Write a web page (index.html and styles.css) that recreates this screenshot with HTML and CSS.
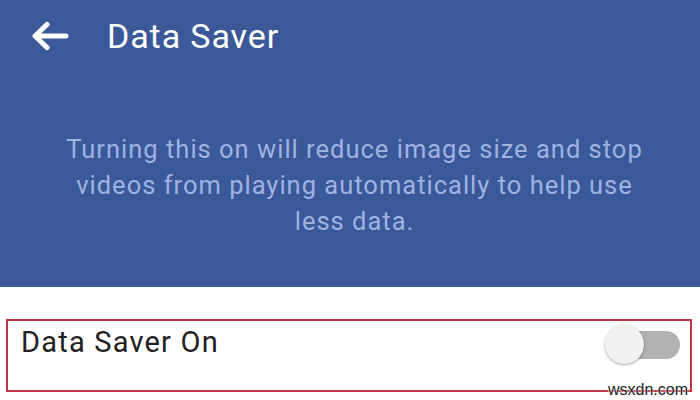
FILE: index.html
```html
<!DOCTYPE html>
<html>
<head>
<meta charset="utf-8">
<link rel="stylesheet" href="styles.css">
</head>
<body>
<div class="page">
  <header class="header">
    <div class="topbar">
      <svg class="back" width="38" height="30" viewBox="0 0 38 30">
        <path d="M35 15 H4 M16 3.5 L4 15 L16 26.5" fill="none" stroke="#ffffff" stroke-width="5" stroke-linecap="round" stroke-linejoin="round"/>
      </svg>
      <h1 class="title">Data Saver</h1>
    </div>
    <p class="desc">Turning this on will reduce image size and stop<br>videos from playing automatically to help use<br>less data.</p>
  </header>
  <section class="setting">
    <span class="label">Data Saver On</span>
    <div class="switch">
      <span class="track"></span>
      <span class="thumb"></span>
    </div>
    <span class="watermark">wsxdn.com</span>
  </section>
</div>
</body>
</html>
```
FILE: styles.css
```css
html, body {
  margin: 0;
  padding: 0;
  background: #ffffff;
}
.page {
  width: 700px;
  height: 400px;
  overflow: hidden;
  font-family: Roboto, "Noto Sans", sans-serif;
}
.header {
  background: #3b5998;
  height: 287px;
  box-sizing: border-box;
  padding-top: 16px;
}
.topbar {
  display: flex;
  align-items: center;
  height: 40px;
}
.back {
  margin-left: 31px;
  display: block;
}
.title {
  margin: 0 0 0 38px;
  font-size: 34px;
  font-weight: 400;
  line-height: 40px;
  letter-spacing: 0.9px;
  color: #ffffff;
}
.desc {
  margin: 75px 0 0 0;
  padding-left: 9px;
  text-align: center;
  font-size: 25.5px;
  line-height: 36px;
  letter-spacing: 1px;
  color: #9fb3e2;
}
.setting {
  position: relative;
  margin: 32px 8px 0 6px;
  height: 73px;
  box-sizing: border-box;
  border: 2px solid #c0383f;
  display: flex;
  justify-content: space-between;
  align-items: flex-start;
  padding: 4px 10px 0 13px;
}
.label {
  font-size: 29px;
  line-height: 34px;
  letter-spacing: 1.2px;
  color: #212121;
}
.switch {
  position: relative;
  width: 76px;
  height: 40px;
}
.track {
  position: absolute;
  right: 0;
  top: 6px;
  width: 58px;
  height: 28px;
  border-radius: 14px;
  background: #b2b2b2;
}
.thumb {
  position: absolute;
  left: 1px;
  top: 0;
  width: 39px;
  height: 39px;
  border-radius: 50%;
  background: #f1f1f1;
  box-shadow: 0 1px 3px rgba(0, 0, 0, 0.35);
}
.watermark {
  position: absolute;
  right: 2px;
  bottom: -9px;
  font-family: "Liberation Sans", Arial, sans-serif;
  font-size: 16px;
  color: #1e1e1e;
  text-shadow: 0 0 2px #ffffff, 0 0 2px #ffffff;
}
```
